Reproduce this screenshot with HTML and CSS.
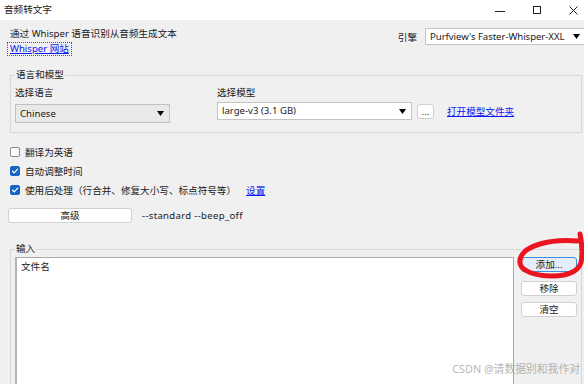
FILE: index.html
```html
<!DOCTYPE html>
<html lang="zh-CN">
<head>
<meta charset="utf-8">
<title>音频转文字</title>
<link rel="stylesheet" href="styles.css">
</head>
<body>
<div class="window">
  <div class="titlebar">
    <span class="title">音频转文字</span>
    <div class="controls">
      <span class="ctl"><svg width="10" height="10" viewBox="0 0 10 10"><path d="M0 6.5H10" stroke="#222" stroke-width="1"/></svg></span>
      <span class="ctl"><svg width="8" height="8" viewBox="0 0 8 8"><rect x="0.5" y="0.5" width="7" height="7" fill="none" stroke="#222" stroke-width="1"/></svg></span>
      <span class="ctl"><svg width="9" height="9" viewBox="0 0 9 9"><path d="M0.5 0.5L8.5 8.5M8.5 0.5L0.5 8.5" stroke="#222" stroke-width="1"/></svg></span>
    </div>
  </div>

  <div class="content">
    <div class="header">
      <div class="intro">
        <div class="desc">通过 Whisper 语音识别从音频生成文本</div>
        <a class="link focus">Whisper 网站</a>
      </div>
      <div class="engine">
        <span class="engine-label">引擎</span>
        <div class="combo white engine-combo">
          <span>Purfview's Faster-Whisper-XXL</span>
          <svg class="arrow" width="7" height="5" viewBox="0 0 7 5"><path d="M0 0H7L3.5 5Z" fill="#000"/></svg>
        </div>
      </div>
    </div>

    <fieldset class="group lang-group">
      <legend>语言和模型</legend>
      <div class="group-row">
        <div class="lang-col">
          <div class="lbl">选择语言</div>
          <div class="combo gray lang-combo">
            <span>Chinese</span>
            <svg class="arrow" width="7" height="5" viewBox="0 0 7 5"><path d="M0 0H7L3.5 5Z" fill="#000"/></svg>
          </div>
        </div>
        <div class="model-col">
          <div class="lbl">选择模型</div>
          <div class="model-row">
            <div class="combo white model-combo">
              <span>large-v3 (3.1 GB)</span>
              <svg class="arrow" width="7" height="5" viewBox="0 0 7 5"><path d="M0 0H7L3.5 5Z" fill="#000"/></svg>
            </div>
            <button class="btn dots">...</button>
            <a class="link folder-link">打开模型文件夹</a>
          </div>
        </div>
      </div>
    </fieldset>

    <div class="checks">
      <div class="check"><span class="box"></span><span>翻译为英语</span></div>
      <div class="check"><span class="box on"><svg width="8" height="8" viewBox="0 0 8 8"><path d="M1.5 4.2L3.2 5.8L6.6 2.2" fill="none" stroke="#fff" stroke-width="1.2" stroke-linecap="round" stroke-linejoin="round"/></svg></span><span>自动调整时间</span></div>
      <div class="check"><span class="box on"><svg width="8" height="8" viewBox="0 0 8 8"><path d="M1.5 4.2L3.2 5.8L6.6 2.2" fill="none" stroke="#fff" stroke-width="1.2" stroke-linecap="round" stroke-linejoin="round"/></svg></span><span>使用后处理（行合并、修复大小写、标点符号等）</span><a class="link settings">设置</a></div>
    </div>

    <div class="adv-row">
      <button class="btn adv">高级</button>
      <span class="args">--standard --beep_off</span>
    </div>

    <fieldset class="group input-group">
      <legend>输入</legend>
      <div class="input-row">
        <div class="listbox"><div class="item">文件名</div></div>
        <div class="side-btns">
          <button class="btn side default">添加...</button>
          <button class="btn side remove">移除</button>
          <button class="btn side clear">清空</button>
        </div>
      </div>
    </fieldset>
  </div>

  <svg class="annotation" width="70" height="56" viewBox="514 228 70 56">
    <path d="M578 241 C565 240 550 241 540 244 C526 248 519 255 520 263 C521 271 535 276 552 276 C570 276 580.5 270 581.5 260 C582.5 251 582 243 580 234" fill="none" stroke="#ea1520" stroke-width="5" stroke-linecap="round" stroke-linejoin="round"/>
  </svg>
  <div class="watermark">CSDN @请数据别和我作对</div>
</div>
</body>
</html>
```

FILE: styles.css
```css
* { box-sizing: border-box; }

html, body {
  margin: 0;
  padding: 0;
  background: #f0f0f0;
}

body {
  font-family: "Segoe UI", "Noto Sans", "Noto Sans CJK SC", sans-serif;
  font-size: 9.6px;
  color: #1a1a1a;
}

.window {
  position: relative;
  width: 584px;
  height: 384px;
  overflow: hidden;
  background: #f0f0f0;
}

/* title bar */
.titlebar {
  height: 20px;
  background: #ffffff;
  display: flex;
  align-items: center;
  padding-left: 4px;
}
.title {
  flex: 1;
  line-height: 20px;
}
.controls {
  display: flex;
  align-items: center;
  margin-right: -8px;
}
.ctl {
  width: 37px;
  height: 20px;
  display: flex;
  align-items: center;
  justify-content: center;
}

/* content */
.content {
  padding-top: 7px;
}

.header {
  display: flex;
  justify-content: space-between;
  align-items: flex-start;
  padding-left: 10px;
}
.intro {
  display: flex;
  flex-direction: column;
  align-items: flex-start;
}
.desc {
  line-height: 14px;
}
.link {
  color: #0a18f5;
  text-decoration: underline;
  cursor: pointer;
}
.link.focus {
  display: inline-block;
  line-height: 12px;
  margin-top: 1px;
  margin-left: -3px;
  padding: 0 2px;
  border: 1px dotted #555;
}

.engine {
  display: flex;
  align-items: center;
  margin-top: 1px;
  margin-right: -6px;
}
.engine-label {
  margin-right: 8px;
}

.combo {
  display: flex;
  align-items: center;
  justify-content: space-between;
  border: 1px solid #c4c4c4;
  padding: 0 4px 0 4px;
  line-height: 14px;
}
.combo.white { background: #ffffff; }
.combo.gray { background: #e9e9e9; border-color: #c2c2c2; }
.arrow { flex: none; }

.engine-combo {
  width: 165px;
  height: 17px;
  padding-right: 9px;
  letter-spacing: -0.05px;
}

/* group boxes */
.group {
  margin: 12px 2px 0 10px;
  padding: 0 0 9px 4px;
  border: 1px solid #d7d7d7;
  min-width: 0;
}
.group legend {
  padding: 0 1px;
  line-height: 14px;
}

.group-row {
  display: flex;
  align-items: flex-start;
  padding-top: 4px;
}
.lbl {
  line-height: 14px;
}
.lang-col {
  width: 155px;
}
.lang-combo {
  margin-top: 4px;
  height: 19px;
  padding-right: 5px;
}
.model-col {
  margin-left: 47px;
}
.model-row {
  display: flex;
  align-items: flex-start;
}
.model-combo {
  margin-top: 2px;
  width: 195px;
  height: 18px;
  padding-right: 5px;
}

.btn {
  font: inherit;
  color: #1a1a1a;
  background: #ffffff;
  border: 1px solid #d0d0d0;
  border-radius: 3px;
  padding: 0;
  height: 15px;
  line-height: 13px;
  text-align: center;
}
.dots {
  margin-top: 4px;
  margin-left: 5px;
  width: 17px;
  line-height: 11px;
}
.folder-link {
  margin-left: 13px;
  margin-top: 5px;
  line-height: 14px;
}

/* checkboxes */
.checks {
  margin-top: 9px;
  padding-left: 10px;
}
.check {
  display: flex;
  align-items: center;
  height: 19px;
}
.box {
  width: 10px;
  height: 10px;
  border: 1px solid #8c8c8c;
  border-radius: 2px;
  background: #fbfbfb;
  margin-right: 5px;
  display: flex;
  align-items: center;
  justify-content: center;
}
.box.on {
  background: #1667c2;
  border-color: #1667c2;
}
.settings {
  margin-left: 10px;
}

/* advanced */
.adv-row {
  display: flex;
  align-items: center;
  margin-top: 9px;
  padding-left: 8px;
}
.adv {
  width: 124px;
}
.args {
  margin-left: 10px;
  letter-spacing: 0.3px;
}

/* input group */
.input-group {
  margin-top: 19px;
  padding: 1px 3px 0 4px;
}
.input-row {
  display: flex;
  align-items: flex-start;
}
.listbox {
  width: 499px;
  height: 160px;
  background: #ffffff;
  border: 1px solid #a9a9a9;
  border-left: 2px solid #b4b4b4;
  padding: 2px 4px;
}
.item {
  line-height: 14px;
}
.side-btns {
  display: flex;
  flex-direction: column;
  margin-left: 7px;
  width: 56px;
}
.side { width: 56px; }
.side.default {
  background: #e3eefa;
  border-color: #3d8ee0;
}
.side.remove { margin-top: 9px; }
.side.clear { margin-top: 6px; }

/* overlays */
.annotation {
  position: absolute;
  left: 514px;
  top: 228px;
}
.watermark {
  position: absolute;
  right: 4px;
  bottom: 8px;
  font-size: 10.8px;
  line-height: 15px;
  color: rgba(140, 140, 140, 0.65);
}
```
